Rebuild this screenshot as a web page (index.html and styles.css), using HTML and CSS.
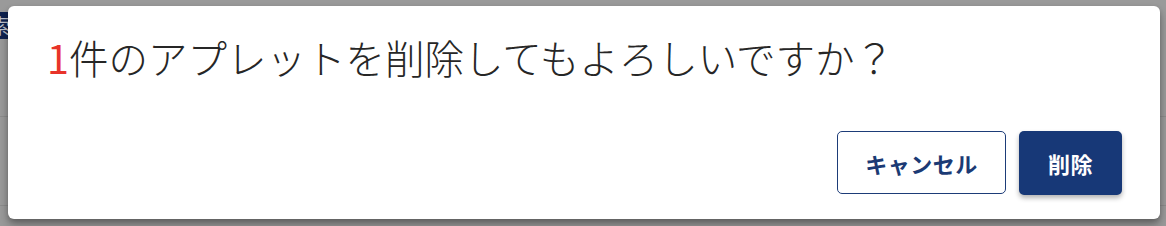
FILE: index.html
```html
<!DOCTYPE html>
<html lang="ja">
<head>
<meta charset="utf-8">
<title>削除の確認</title>
<link rel="stylesheet" href="styles.css">
</head>
<body>
<div class="page">
  <div class="page-bar">
    <span class="page-btn">検索</span>
  </div>
  <div class="page-row"></div>
  <div class="page-row page-row--last"></div>
</div>
<div class="dialog" role="dialog" aria-modal="true">
  <p class="dialog-title"><span class="count">1</span>件のアプレットを削除してもよろしいですか？</p>
  <div class="dialog-actions">
    <button class="btn btn-outline" type="button">キャンセル</button>
    <button class="btn btn-primary" type="button">削除</button>
  </div>
</div>
</body>
</html>
```
FILE: styles.css
```css
html, body {
  margin: 0;
  padding: 0;
}
body {
  width: 1166px;
  height: 226px;
  overflow: hidden;
  background: #9a9a9a;
  font-family: "Noto Sans CJK JP", "Noto Sans", sans-serif;
  position: relative;
}
.page {
  display: flex;
  flex-direction: column;
}
.page-bar {
  height: 12px;
  position: relative;
}
.page-btn {
  position: absolute;
  top: 12px;
  left: -34px;
  width: 44px;
  height: 27px;
  background: #0f224f;
  color: #bfc3cc;
  font-size: 20px;
  line-height: 27px;
  text-align: right;
  white-space: nowrap;
  overflow: hidden;
  direction: rtl;
}
.page-row {
  height: 104px;
  border-bottom: 1px solid #8c8c8c;
}
.page-row--last {
  height: 88px;
}
.dialog {
  position: absolute;
  left: 8px;
  top: 6px;
  width: 1152px;
  height: 213px;
  box-sizing: border-box;
  background: #fff;
  border-radius: 6px;
  box-shadow: 0 6px 10px rgba(0, 0, 0, 0.3), 0 2px 4px rgba(0, 0, 0, 0.15);
  padding: 0 38px 24px 39px;
  display: flex;
  flex-direction: column;
}
.dialog-title {
  margin: 27px 0 0;
  font-size: 39.5px;
  line-height: 48px;
  font-weight: 300;
  color: #262626;
  white-space: nowrap;
}
.count {
  color: #e8332a;
  font-weight: 400;
}
.dialog-actions {
  margin-top: auto;
  display: flex;
  justify-content: flex-end;
  gap: 13px;
}
.btn {
  box-sizing: border-box;
  height: 64px;
  padding: 0;
  border-radius: 5px;
  font-family: "Noto Sans CJK JP", "Noto Sans", sans-serif;
  font-size: 22px;
  font-weight: 700;
  line-height: 1;
  letter-spacing: 0.5px;
  white-space: nowrap;
  text-align: center;
  cursor: pointer;
}
.btn-outline {
  width: 169px;
  height: 63px;
  background: #fff;
  color: #1b3a74;
  border: 1px solid #1d3c78;
  align-self: flex-start;
}
.btn-primary {
  width: 103px;
  background: #173877;
  color: #fff;
  border: none;
  box-shadow: 0 3px 5px rgba(0, 0, 0, 0.3);
}
```
